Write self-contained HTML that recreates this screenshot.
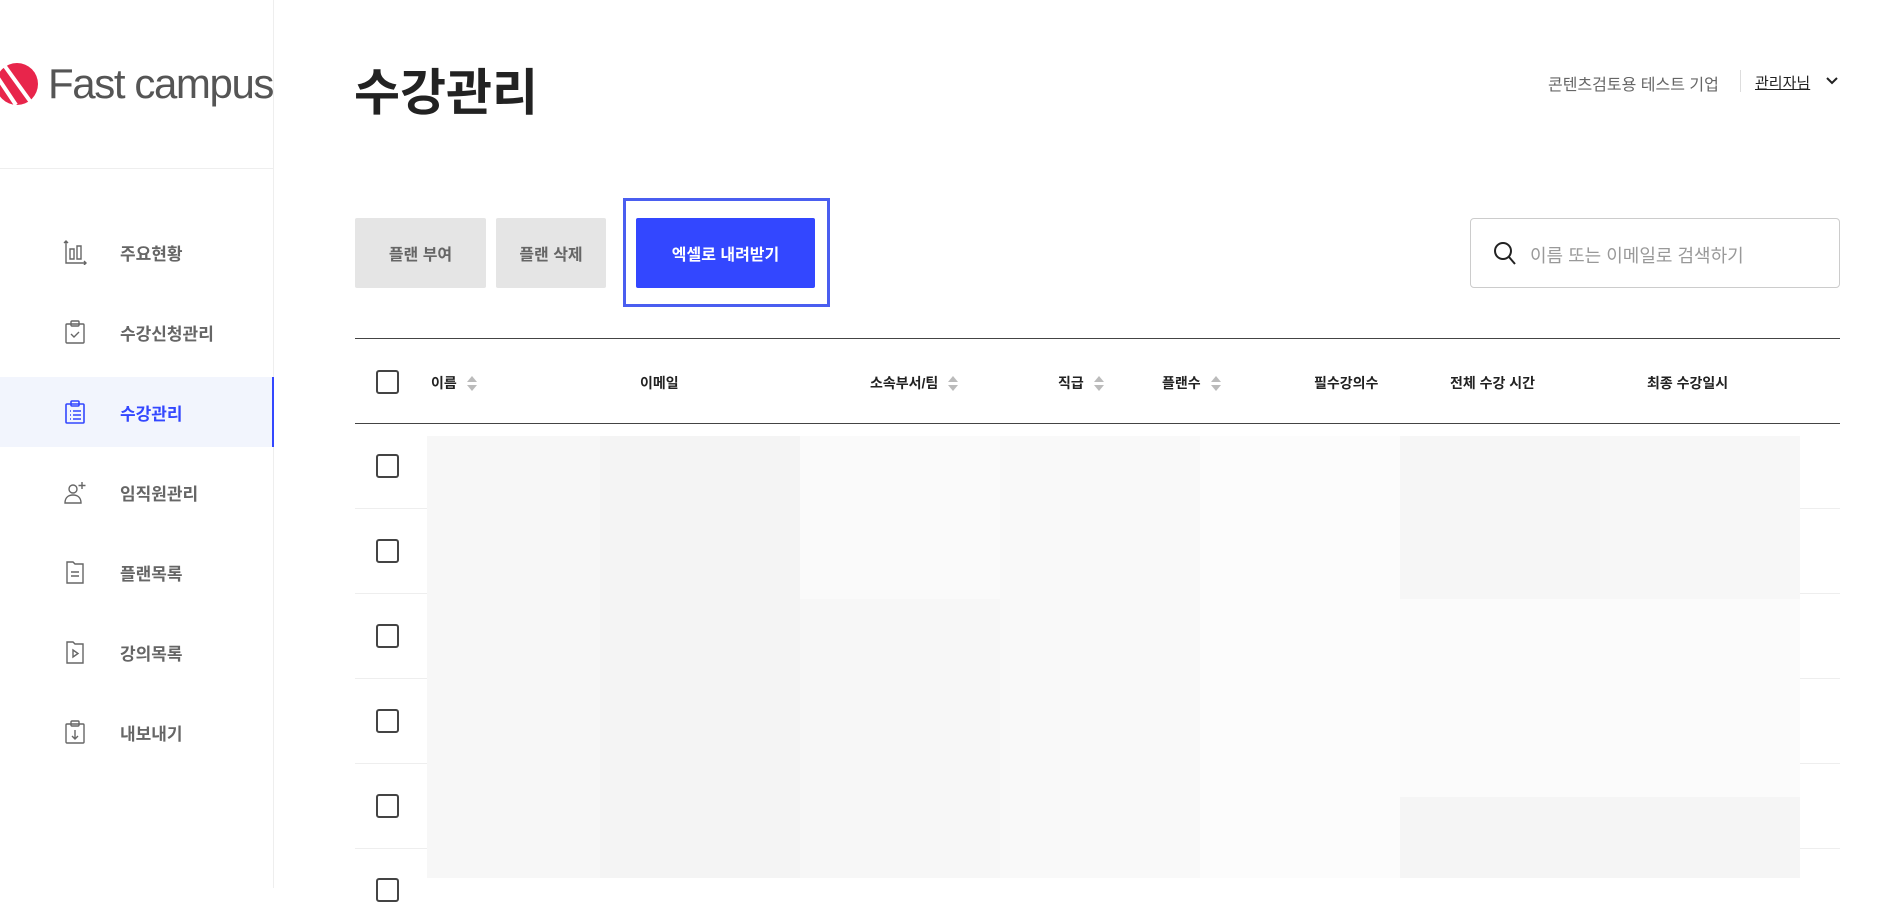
<!DOCTYPE html>
<html><head><meta charset="utf-8">
<style>
*{margin:0;padding:0;box-sizing:border-box}
body{width:1878px;height:888px;overflow:hidden;background:#fff;font-family:"Liberation Sans","Noto Sans CJK KR",sans-serif;position:relative;color:#222}
.abs{position:absolute}
.side{left:0;top:0;width:274px;height:888px;border-right:1px solid #eee}
.nav{position:absolute;left:0;width:274px;height:70px;display:flex;align-items:center;font-size:17px;font-weight:bold;color:#666}
.nav svg{position:absolute;left:62px;width:26px;height:26px}
.nav span{position:absolute;left:120px}
.nav.act{background:#f2f5fd;color:#3347ff;border-right:2px solid #3347ff}
.btn{position:absolute;top:218px;height:70px;border-radius:2px;display:flex;align-items:center;justify-content:center;font-size:16px;font-weight:bold}
.cb{position:absolute;width:23px;height:24px;border:2px solid #444;border-radius:3px;left:376px}
.th{position:absolute;top:373px;font-size:14px;font-weight:bold;color:#222;white-space:nowrap}
.sort{display:inline-block;vertical-align:middle;margin-left:10px;width:10px;height:16px;position:relative}
.sort:before{content:"";position:absolute;left:0;top:0;border:5px solid transparent;border-bottom:6px solid #bbb;border-top:0}
.sort:after{content:"";position:absolute;left:0;top:9px;border:5px solid transparent;border-top:6px solid #bbb;border-bottom:0}
.blk{position:absolute}
</style></head><body>
<div class="abs side"></div>
<svg class="abs" style="left:-6px;top:61px" width="46" height="46" viewBox="0 0 46 46"><circle cx="23" cy="23" r="21" fill="#e8254b"/><path d="M10 4 L36 40 M2 14 L22 44" stroke="#fff" stroke-width="4"/></svg>
<div class="abs" style="left:48px;top:58px;font-size:42px;color:#555;letter-spacing:-1.4px;line-height:52px;white-space:nowrap">Fast campus</div>
<div class="abs" style="left:0;top:168px;width:274px;height:1px;background:#eee"></div>

<div class="nav" style="top:217px"><svg viewBox="0 0 26 26" fill="none" stroke="#666" stroke-width="1.4"><path d="M4 2v22h20M2 4l2-2 2 2M22 22l2 2-2 2M8 10h4v10H8zM15 7h4v13h-4z"/></svg><span>주요현황</span></div>
<div class="nav" style="top:297px"><svg viewBox="0 0 26 26" fill="none" stroke="#666" stroke-width="1.4"><rect x="4" y="5" width="18" height="19" rx="1"/><rect x="9" y="2" width="8" height="5" rx="1"/><path d="M9 15l3 3 5-5"/></svg><span>수강신청관리</span></div>
<div class="nav act" style="top:377px"><svg viewBox="0 0 26 26" fill="none" stroke="#3347ff" stroke-width="1.6"><rect x="4" y="5" width="18" height="19" rx="1"/><rect x="9" y="2" width="8" height="5" rx="1"/><path d="M8 12h1M11 12h8M8 16h1M11 16h8M8 20h1M11 20h8"/></svg><span>수강관리</span></div>
<div class="nav" style="top:457px"><svg viewBox="0 0 26 26" fill="none" stroke="#666" stroke-width="1.4"><circle cx="11" cy="10" r="4"/><path d="M3 24c0-6 4-8 8-8s8 2 8 8zM20 3v7M16.5 6.5h7"/></svg><span>임직원관리</span></div>
<div class="nav" style="top:537px"><svg viewBox="0 0 26 26" fill="none" stroke="#666" stroke-width="1.4"><path d="M5 3h6l2 2h8v19H5zM9 13h8M9 17h8"/></svg><span>플랜목록</span></div>
<div class="nav" style="top:617px"><svg viewBox="0 0 26 26" fill="none" stroke="#666" stroke-width="1.4"><path d="M5 3h6l2 2h8v19H5zM11 11l5 3.5-5 3.5z"/></svg><span>강의목록</span></div>
<div class="nav" style="top:697px"><svg viewBox="0 0 26 26" fill="none" stroke="#666" stroke-width="1.4"><rect x="4" y="5" width="18" height="19" rx="1"/><rect x="9" y="2" width="8" height="5" rx="1"/><path d="M13 11v9M10 17l3 3 3-3"/></svg><span>내보내기</span></div>

<div class="abs" style="left:354px;top:62px;font-size:50px;font-weight:bold;color:#222;line-height:62px">수강관리</div>

<div class="abs" style="left:1548px;top:71px;font-size:16px;color:#666;white-space:nowrap">콘텐츠검토용 테스트 기업</div>
<div class="abs" style="left:1740px;top:70px;width:1px;height:22px;background:#ddd"></div>
<div class="abs" style="left:1755px;top:72px;font-size:15px;color:#222;text-decoration:underline">관리자님 </div>
<svg class="abs" style="left:1826px;top:76px" width="12" height="10" viewBox="0 0 12 10"><path d="M1 2l5 5 5-5" fill="none" stroke="#222" stroke-width="2"/></svg>

<div class="btn" style="left:355px;width:131px;background:#e5e5e5;color:#666">플랜 부여</div>
<div class="btn" style="left:496px;width:110px;background:#e5e5e5;color:#666">플랜 삭제</div>
<div class="abs" style="left:623px;top:198px;width:207px;height:109px;border:3px solid #4a5ef0"></div>
<div class="btn" style="left:636px;width:179px;background:#3347ff;color:#fff">엑셀로 내려받기</div>

<div class="abs" style="left:1470px;top:218px;width:370px;height:70px;border:1px solid #ccc;border-radius:4px"></div>
<svg class="abs" style="left:1492px;top:240px" width="26" height="26" viewBox="0 0 26 26"><circle cx="11" cy="11" r="8" fill="none" stroke="#222" stroke-width="2"/><path d="M17 17l6 7" stroke="#222" stroke-width="2"/></svg>
<div class="abs" style="left:1530px;top:242px;font-size:18px;color:#999">이름 또는 이메일로 검색하기</div>

<div class="abs" style="left:355px;top:338px;width:1485px;height:1px;background:#444"></div>
<div class="abs" style="left:355px;top:423px;width:1485px;height:1px;background:#444"></div>
<div class="cb" style="top:370px"></div>
<div class="th" style="left:431px">이름<i class="sort"></i></div>
<div class="th" style="left:640px">이메일</div>
<div class="th" style="left:870px">소속부서/팀<i class="sort"></i></div>
<div class="th" style="left:1058px">직급<i class="sort"></i></div>
<div class="th" style="left:1162px">플랜수<i class="sort"></i></div>
<div class="th" style="left:1314px">필수강의수</div>
<div class="th" style="left:1450px">전체 수강 시간</div>
<div class="th" style="left:1647px">최종 수강일시</div>

<div class="abs" style="left:355px;top:508px;width:1485px;height:1px;background:#eee"></div>
<div class="abs" style="left:355px;top:593px;width:1485px;height:1px;background:#eee"></div>
<div class="abs" style="left:355px;top:678px;width:1485px;height:1px;background:#eee"></div>
<div class="abs" style="left:355px;top:763px;width:1485px;height:1px;background:#eee"></div>
<div class="abs" style="left:355px;top:848px;width:1485px;height:1px;background:#eee"></div>

<div class="blk" style="left:427px;top:436px;width:173px;height:442px;background:#f7f7f7"></div>
<div class="blk" style="left:600px;top:436px;width:200px;height:442px;background:#f4f4f4"></div>
<div class="blk" style="left:800px;top:436px;width:200px;height:163px;background:#fafafa"></div>
<div class="blk" style="left:800px;top:599px;width:200px;height:279px;background:#f7f7f7"></div>
<div class="blk" style="left:1000px;top:436px;width:200px;height:442px;background:#f9f9f9"></div>
<div class="blk" style="left:1200px;top:436px;width:200px;height:442px;background:#fcfcfc"></div>
<div class="blk" style="left:1400px;top:436px;width:200px;height:163px;background:#f6f6f6"></div>
<div class="blk" style="left:1600px;top:436px;width:200px;height:163px;background:#f7f7f7"></div>
<div class="blk" style="left:1400px;top:599px;width:400px;height:198px;background:#fbfbfb"></div>
<div class="blk" style="left:1400px;top:797px;width:400px;height:81px;background:#f5f5f5"></div>

<div class="cb" style="top:454px"></div>
<div class="cb" style="top:539px"></div>
<div class="cb" style="top:624px"></div>
<div class="cb" style="top:709px"></div>
<div class="cb" style="top:794px"></div>
<div class="cb" style="top:878px"></div>
</body></html>
